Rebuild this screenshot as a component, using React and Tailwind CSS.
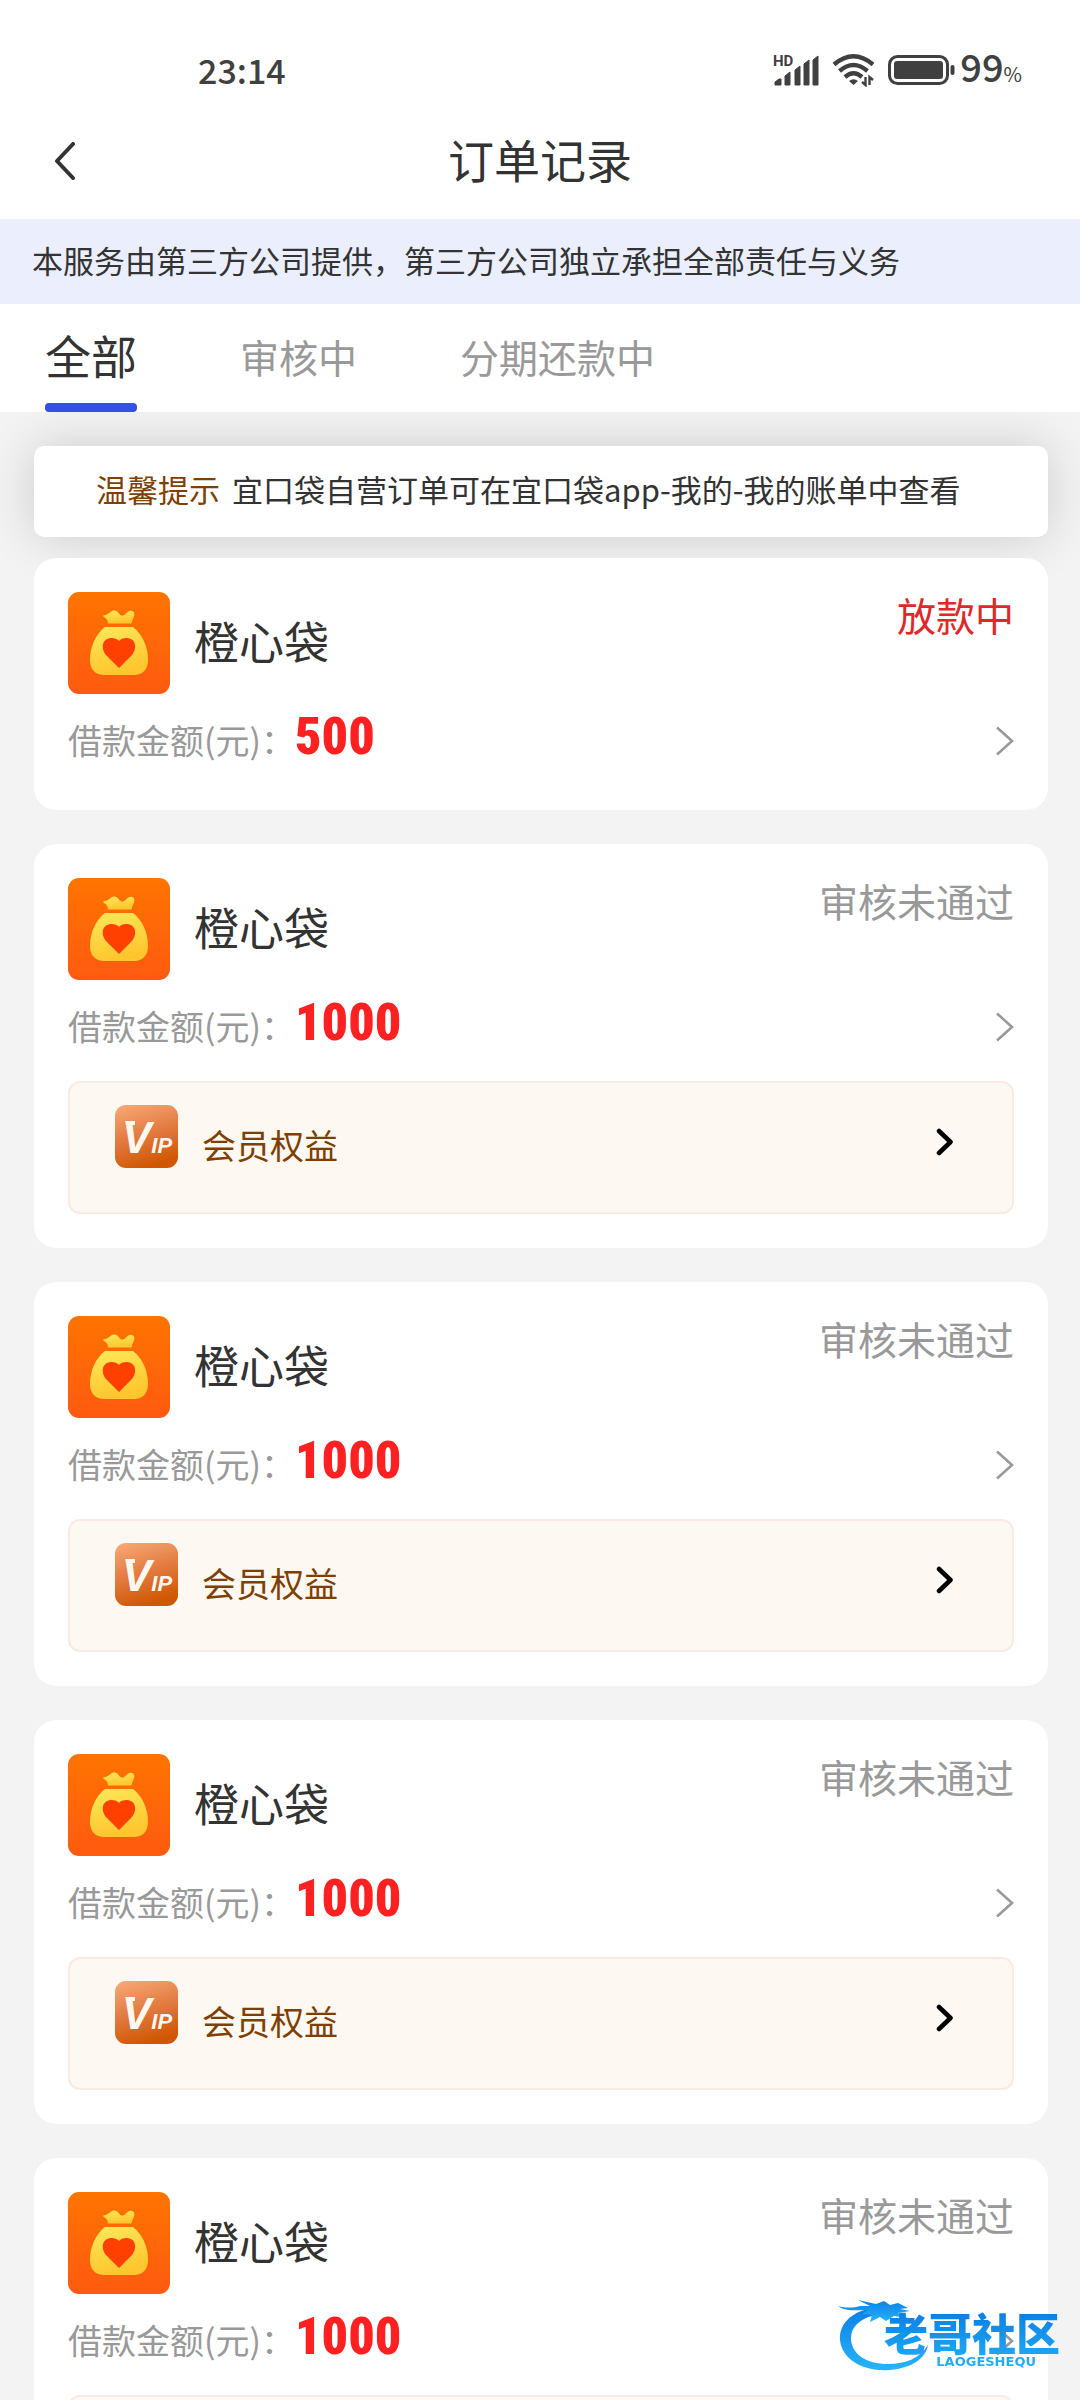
import React, { useState } from 'react';

const TABS = ['全部', '审核中', '分期还款中'];

const ORDERS = [
  { id: 1, name: '橙心袋', amount: 500, status: '放款中', active: true, vip: false },
  { id: 2, name: '橙心袋', amount: 1000, status: '审核未通过', active: false, vip: true },
  { id: 3, name: '橙心袋', amount: 1000, status: '审核未通过', active: false, vip: true },
  { id: 4, name: '橙心袋', amount: 1000, status: '审核未通过', active: false, vip: true },
  { id: 5, name: '橙心袋', amount: 1000, status: '审核未通过', active: false, vip: true },
];

const SignalIcon = () => (
  <svg width="47" height="36" viewBox="0 -2 47 36" fill="#404040">
    <text x="0" y="12" fontSize="15" fontWeight="700" fontFamily="Roboto, sans-serif">HD</text>
    <path d="M2 31v-3l4-3h2v6zM12 31v-9l5-4v13zM22 31V16l5-4v19zM31 31V10l5-4v25zM40 31V6l5-4v29z" stroke="#404040" strokeWidth="1" strokeLinejoin="round" />
  </svg>
);

const WifiIcon = () => (
  <svg width="44" height="34" viewBox="0 0 44 34" fill="none" stroke="#404040" strokeWidth="4.4">
    <path d="M2 11.500Q21.500-5 41 11.500" />
    <path d="M7.500 18Q21.500 6 35.500 18" />
    <path d="M13 24Q21.500 16.500 30 24" />
    <path d="M17 28Q21.500 24.500 26 28L21.500 32z" fill="#404040" stroke="none" />
    <path d="M33.500 24v8l-3.500-3M37.500 32v-8l3.500 3" strokeWidth="2.400" />
  </svg>
);

const BatteryIcon = () => (
  <svg width="68" height="30" viewBox="0 0 68 30" fill="#404040">
    <rect x="1.500" y="1.500" width="58" height="27" rx="8" fill="none" stroke="#404040" strokeWidth="3" />
    <rect x="6" y="6" width="49" height="18" rx="3" />
    <rect x="62.500" y="10" width="4" height="10" rx="2" />
  </svg>
);

const StatusBar = () => (
  <div className="flex h-[102px] items-end justify-between pr-[58px] pb-2 pl-[198px] text-[#404040]">
    <span className="text-[34px] leading-[48px] font-medium">23:14</span>
    <div className="flex h-[48px] items-center gap-3">
      <SignalIcon />
      <WifiIcon />
      <div className="flex items-center gap-1">
        <BatteryIcon />
        <span className="flex items-baseline leading-[48px]">
          <span className="text-[38px] font-medium">99</span>
          <span className="text-[20px]">%</span>
        </span>
      </div>
    </div>
  </div>
);

const BagIcon = () => (
  <svg width="102" height="102" viewBox="0 0 102 102" className="shrink-0">
    <defs>
      <linearGradient id="bagBg" x1="0" y1="0" x2="0" y2="1">
        <stop offset="0" stopColor="#ff7400" />
        <stop offset="1" stopColor="#ff5a10" />
      </linearGradient>
      <linearGradient id="bagFill" x1="0" y1="0" x2="0.3" y2="1">
        <stop offset="0" stopColor="#ffe95a" />
        <stop offset="1" stopColor="#ffc62e" />
      </linearGradient>
    </defs>
    <rect width="102" height="102" rx="11" fill="url(#bagBg)" />
    <path d="M35.500 23.500C38 23 40 22 42 20.500C46 17 49 19 51 21.500C53 24.500 56 24 58 21.500C60 18.500 64 17.500 66 20.500C67.500 24 64 27 63.500 31.500H40C40 28 38.500 26.500 36 25C35 24.500 35 23.800 35.500 23.500Z" fill="url(#bagFill)" />
    <path d="M37 35H65C74 42 80 54 80 68C80 78 74 83 66 83H36C28 83 22 78 22 68C22 54 28 42 37 35Z" fill="url(#bagFill)" />
    <path d="M51 76L39 64C32 57 34 46.500 43 46C47 46 49.500 47 51 49C52.500 47 55 46 59 46C68 46.500 70 57 63 64Z" fill="#ff4000" />
  </svg>
);

const VipIcon = () => (
  <svg width="63" height="63" viewBox="0 0 63 63" className="mb-[22px] shrink-0">
    <defs>
      <linearGradient id="vipBg" x1="0.2" y1="0" x2="0.5" y2="1">
        <stop offset="0" stopColor="#f6a672" />
        <stop offset="0.5" stopColor="#e27a40" />
        <stop offset="1" stopColor="#d05600" />
      </linearGradient>
    </defs>
    <rect width="63" height="63" rx="11" fill="url(#vipBg)" />
    <text x="7" y="48" fontSize="44" fill="#fff8f0" fontFamily="Liberation Sans, sans-serif" fontWeight="700" fontStyle="italic">
      V<tspan fontSize="22">IP</tspan>
    </text>
    <path d="M10 16h10v4H12z" fill="#fff8f0" />
  </svg>
);

const VipEntry = () => (
  <button className="mt-[19px] flex h-[133px] w-full items-center rounded-xl border-2 border-[#f9ebe2] bg-[#fdf8f2] pr-[58px] pl-[45px]">
    <VipIcon />
    <span className="ml-6 pb-1.5 text-[34px] leading-[48px] text-[#7f3f00]">会员权益</span>
    <svg width="18" height="28" viewBox="0 0 18 28" className="mb-3 ml-auto" fill="none" stroke="#000" strokeWidth="4.500" strokeLinecap="round" strokeLinejoin="round">
      <path d="M3 3l11.500 11L3 25" />
    </svg>
  </button>
);

const OrderCard = ({ order }) => (
  <li className="rounded-[22px] bg-white p-[34px]">
    <div className="flex items-start">
      <BagIcon />
      <h2 className="ml-6 self-center pb-1 text-[45px] leading-[64px] text-[#333]">{order.name}</h2>
      <span className={`ml-auto text-[39px] leading-[44px] ${order.active ? 'text-[#e02828]' : 'text-[#999]'}`}>
        {order.status}
      </span>
    </div>
    <a href="#detail" className="flex h-[82px] items-center pt-2">
      <span className="pt-0.5 text-[34px] leading-[48px] text-[#999]">借款金额(元)：</span>
      <span className="pb-1 font-['Roboto_Condensed',Roboto,sans-serif] text-[52px] leading-[64px] font-black text-[#ff2121]">
        {order.amount}
      </span>
      <svg width="18" height="30" viewBox="0 0 18 30" className="mt-1 ml-auto" fill="none" stroke="#999" strokeWidth="2.600">
        <path d="M1 1.500l15 13.500L1 28.500" />
      </svg>
    </a>
    {order.vip && <VipEntry />}
  </li>
);

// Community badge in the bottom right corner
const Watermark = () => (
  <div className="pointer-events-none fixed right-5 bottom-[28px] flex items-end">
    <svg width="92" height="76" viewBox="0 0 92 76" className="-mr-[46px]">
      <defs>
        <linearGradient id="dragon" x1="0" y1="0" x2="0" y2="1">
          <stop offset="0" stopColor="#0c7fe4" />
          <stop offset="1" stopColor="#27b4f8" />
        </linearGradient>
      </defs>
      <g fill="url(#dragon)">
        <path d="M34 12C12 16 1 29 2 44C4 64 26 76 52 74C74 72 88 62 90 49C82 62 68 68 50 68C28 68 13 58 13 42C13 31 22 23 34 20L52 21Z" />
        <path d="M0 10C8 12 15 12 22 10L32 10L20 4L38 8L46 5L52 9L60 7L70 12L62 13L72 15L60 17L70 22L56 20L48 25L42 21L32 26L34 19L24 18L30 14C20 14 8 16 0 10Z" />
      </g>
    </svg>
    <div className="relative bg-gradient-to-b from-[#0c7fe4] to-[#27b4f8] bg-clip-text text-transparent">
      <p className="text-[44px] leading-[40px] font-black">老哥社区</p>
      <p className="pr-6 text-right font-['DejaVu_Sans',sans-serif] text-[13px] leading-[20px] font-bold">LAOGESHEQU</p>
    </div>
  </div>
);

const App = () => {
  const [activeTab, setActiveTab] = useState(0);

  return (
    <div className="flex h-screen flex-col bg-[#f3f3f3] font-['Noto_Sans_CJK_SC',sans-serif] text-[#333]">
      <header className="bg-white">
        <StatusBar />
        <div className="grid h-[117px] grid-cols-[1fr_auto_1fr] items-center px-[54px]">
          <button aria-label="返回" className="justify-self-start">
            <svg width="22" height="38" viewBox="0 0 22 38" fill="none" stroke="#333" strokeWidth="4" strokeLinecap="round" strokeLinejoin="round">
              <path d="M19 2L3 19l16 17" />
            </svg>
          </button>
          <h1 className="pb-1.5 text-[46px] leading-[64px]">订单记录</h1>
        </div>
        <p className="bg-[#ebeefd] px-8 pt-4 pb-5 text-[31px] leading-[49px]">
          本服务由第三方公司提供，第三方公司独立承担全部责任与义务
        </p>
        <nav className="flex h-[108px] gap-[103px] pl-[45px]">
          {TABS.map((tab, index) => (
            <button
              key={tab}
              onClick={() => setActiveTab(index)}
              className={`relative ${activeTab === index ? 'pb-2 text-[46px]' : 'pb-1 text-[39px] text-[#999]'}`}
            >
              {tab}
              {activeTab === index && <span className="absolute inset-x-0 bottom-0 h-[9px] rounded bg-[#3450e3]" />}
            </button>
          ))}
        </nav>
      </header>

      <main className="flex-1 overflow-y-auto pt-[34px] pr-8 pl-[34px] [scrollbar-width:none]">
        <p className="rounded-[10px] bg-white pt-[18px] pr-8 pb-6 pl-[62px] text-[31px] leading-[49px] shadow-[0_0_50px_rgba(0,0,0,0.16)]">
          <span className="mr-3 text-[#7f3f00]">温馨提示</span>
          宜口袋自营订单可在宜口袋app-我的-我的账单中查看
        </p>
        <ul className="mt-[21px] flex flex-col gap-[34px]">
          {ORDERS.map((order) => (
            <OrderCard key={order.id} order={order} />
          ))}
        </ul>
      </main>

      <Watermark />
    </div>
  );
};

export default App;
